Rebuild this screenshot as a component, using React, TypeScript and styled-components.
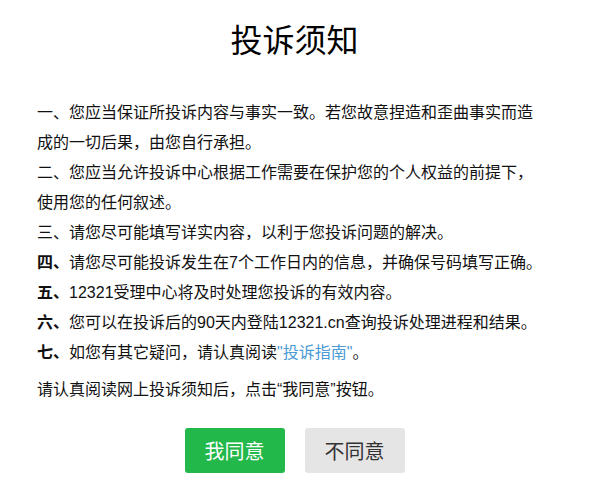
import React from 'react';
import styled, { createGlobalStyle } from 'styled-components';

const GlobalStyle = createGlobalStyle`
  body {
    margin: 0;
    background: #fff;
    font-family: "Liberation Sans", "Noto Sans CJK SC", sans-serif;
    color: #111;
  }
`;

const Page = styled.div`
  width: 589px;
  padding: 0 37px;
  box-sizing: border-box;
`;

const Title = styled.h1`
  margin: 0;
  padding-top: 18px;
  height: 46px;
  line-height: 46px;
  font-size: 32px;
  font-weight: normal;
  text-align: center;
  color: #000;
`;

const Notice = styled.div`
  margin-top: 34px;
  width: 505px;
  font-size: 16px;
  line-height: 30px;
`;

const Item = styled.p`
  margin: 0;
`;

const Num = styled.span<{ $bold?: boolean }>`
  font-weight: ${(p) => (p.$bold ? 'bold' : 'normal')};
`;

const Guide = styled.a`
  color: #4a9ad4;
  text-decoration: none;
`;

const Hint = styled.p`
  margin: 7px 0 0;
  font-size: 16px;
  line-height: 30px;
`;

const Actions = styled.div`
  display: flex;
  justify-content: center;
  gap: 20px;
  margin-top: 23px;
`;

const Button = styled.button<{ $primary?: boolean }>`
  width: 100px;
  height: 45px;
  padding: 0;
  border: none;
  border-radius: 3px;
  font-family: "Liberation Sans", "Noto Sans CJK SC", sans-serif;
  font-size: 20px;
  cursor: pointer;
  background: ${(p) => (p.$primary ? '#22b84a' : '#e5e5e5')};
  color: ${(p) => (p.$primary ? '#fff' : '#333')};
`;

const items: { num: string; bold?: boolean; text: React.ReactNode }[] = [
  { num: '一', text: '您应当保证所投诉内容与事实一致。若您故意捏造和歪曲事实而造成的一切后果，由您自行承担。' },
  { num: '二', text: '您应当允许投诉中心根据工作需要在保护您的个人权益的前提下，使用您的任何叙述。' },
  { num: '三', text: '请您尽可能填写详实内容，以利于您投诉问题的解决。' },
  { num: '四', bold: true, text: '请您尽可能投诉发生在7个工作日内的信息，并确保号码填写正确。' },
  { num: '五', bold: true, text: '12321受理中心将及时处理您投诉的有效内容。' },
  { num: '六', bold: true, text: '您可以在投诉后的90天内登陆12321.cn查询投诉处理进程和结果。' },
  {
    num: '七',
    bold: true,
    text: (
      <>
        如您有其它疑问，请认真阅读<Guide href="#">"投诉指南"</Guide>。
      </>
    ),
  },
];

export default function App() {
  return (
    <>
      <GlobalStyle />
      <Page>
        <Title>投诉须知</Title>
        <Notice>
          {items.map((it) => (
            <Item key={it.num}>
              <Num $bold={it.bold}>{it.num}、</Num>
              {it.text}
            </Item>
          ))}
        </Notice>
        <Hint>请认真阅读网上投诉须知后，点击“我同意”按钮。</Hint>
        <Actions>
          <Button $primary>我同意</Button>
          <Button>不同意</Button>
        </Actions>
      </Page>
    </>
  );
}
